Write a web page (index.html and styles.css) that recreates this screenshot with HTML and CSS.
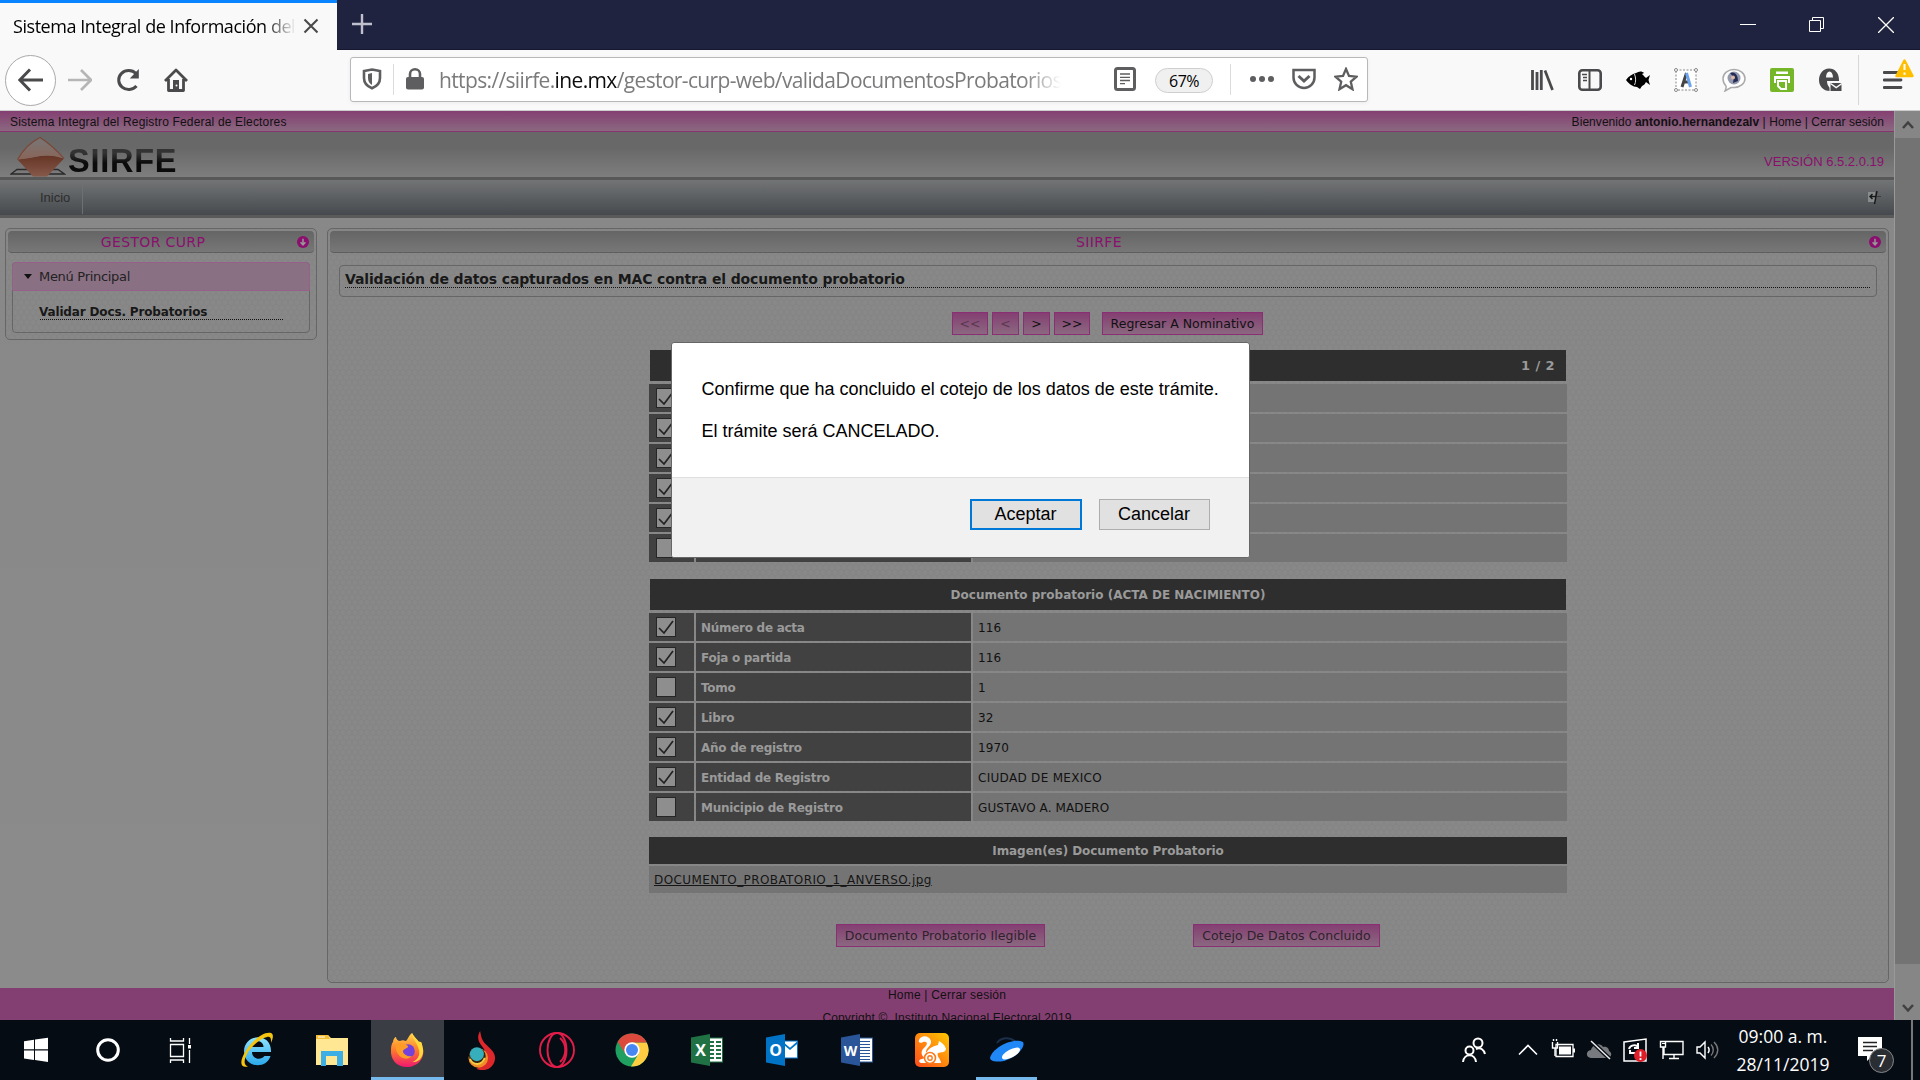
FILE: index.html
```html
<!DOCTYPE html>
<html lang="es">
<head>
<meta charset="utf-8">
<title>Sistema Integral de Información del Registro Federal de Electores</title>
<link rel="stylesheet" href="styles.css">
</head>
<body>
<svg class="defs" width="0" height="0">
  <defs>
    <g id="check"><path d="M3 11l5 5 9-12" fill="none" stroke="#222" stroke-width="1.7"/></g>
    <g id="down"><circle cx="6" cy="6" r="6" fill="#8b0f6e"/><path d="M6 2.8v6M3.6 6.2L6 8.8l2.4-2.6" fill="none" stroke="#999" stroke-width="1.5"/></g>
    <linearGradient id="gOrange" x1="0" y1="0" x2="0" y2="1"><stop offset="0" stop-color="#ffd54a"/><stop offset=".5" stop-color="#ff7a2c"/><stop offset="1" stop-color="#f01870"/></linearGradient>
    <linearGradient id="gUc" x1="0" y1="1" x2="1" y2="0"><stop offset="0" stop-color="#ff4a1c"/><stop offset="1" stop-color="#ffc800"/></linearGradient>
    <linearGradient id="gIe" x1="0" y1="0" x2="0" y2="1"><stop offset="0" stop-color="#8fe4fd"/><stop offset="1" stop-color="#2ba8ec"/></linearGradient>
    <linearGradient id="gLogo" x1="0" y1="0" x2="0" y2="1"><stop offset="0" stop-color="#777"/><stop offset="1" stop-color="#8a6558"/></linearGradient>
    <linearGradient id="gLogoLow" x1="0" y1="0" x2="0" y2="1"><stop offset="0" stop-color="#653425"/><stop offset="1" stop-color="#86594a"/></linearGradient>
  </defs>
</svg>

<div class="titlebar">
  <div class="tab"><span class="tab-title">Sistema Integral de Información del</span>
    <svg class="tab-close" width="16" height="16" viewBox="0 0 16 16"><path d="M1.5 1.5l13 13M14.5 1.5l-13 13" stroke="#4a4a4c" stroke-width="2.1"/></svg>
  </div>
  <svg class="new-tab" width="22" height="22" viewBox="0 0 22 22"><path d="M11 1v20M1 11h20" stroke="#bfc0cc" stroke-width="2.4"/></svg>
  <div class="win-controls">
    <svg width="16" height="16"><path d="M0 7.5h16" stroke="#fff"/></svg>
    <svg width="16" height="16"><path d="M.5 3.500h11v11h-11zM3.500 3.500v-3h11v11h-3" fill="none" stroke="#fff"/></svg>
    <svg width="16" height="16"><path d="M0 0l16 16M16 0L0 16" stroke="#fff" stroke-width="1.3"/></svg>
  </div>
</div>

<div class="toolbar">
  <div class="nav-icons">
    <span class="back"><svg width="26" height="26" viewBox="0 0 26 26"><path d="M25 13H2M12 2.500L1.800 13 12 23.500" fill="none" stroke="#4a4a4c" stroke-width="3"/></svg></span>
    <svg width="24" height="24" viewBox="0 0 24 24"><path d="M0 12h22M13 2l10 10-10 10" fill="none" stroke="#b6b6b8" stroke-width="2.700"/></svg>
    <svg width="24" height="24" viewBox="0 0 24 24"><path d="M20 5.500A10 9.500 0 1 0 20.500 18" fill="none" stroke="#4a4a4c" stroke-width="3"/><path d="M22.800 1v9.500h-9z" fill="#4a4a4c"/></svg>
    <svg width="24" height="24" viewBox="0 0 24 24"><path d="M1 13L12 2l11 11M4.500 11v11.500h15V11" fill="none" stroke="#4a4a4c" stroke-width="2.800" stroke-linejoin="round"/><path d="M9 12h6v10H9z" fill="#4a4a4c"/><circle cx="12.500" cy="17.500" r="1" fill="#f9f9fa"/></svg>
  </div>
  <div class="urlbar">
    <svg class="shield" width="20" height="22" viewBox="0 0 20 22"><path d="M10 1.500L18 3v7c0 5-3.500 8.500-8 10.300C5.500 18.500 2 15 2 10V3z" fill="none" stroke="#5e5e60" stroke-width="2.600"/><path d="M10 5v12c-2.500-1.500-4-3.500-4-7V6z" fill="#5e5e60"/></svg>
    <i class="vsep"></i>
    <svg class="lock" width="20" height="22" viewBox="0 0 20 22"><path d="M5 10V6a5 4.700 0 0 1 10 0v4" fill="none" stroke="#5e5e60" stroke-width="2.600"/><rect x="1" y="9" width="18" height="12.500" rx="2" fill="#5e5e60"/></svg>
    <span class="url">https://siirfe.<b>ine.mx</b>/gestor-curp-web/validaDocumentosProbatorios/</span>
    <svg class="reader" width="22" height="24" viewBox="0 0 22 24"><rect x="1.500" y="1.500" width="19" height="21" rx="2" fill="#fff" stroke="#5e5e60" stroke-width="3"/><path d="M6 7h10M6 10.300h10M6 13.500h10M6 16.700h5" stroke="#5e5e60" stroke-width="1.300"/></svg>
    <span class="zoom">67%</span>
    <i class="vsep sep2"></i>
    <svg class="dots" width="26" height="8" viewBox="0 0 26 8"><g fill="#5e5e60"><circle cx="4" cy="4" r="3"/><circle cx="13" cy="4" r="3"/><circle cx="22" cy="4" r="3"/></g></svg>
    <svg class="pocket" width="24" height="22" viewBox="0 0 24 22"><path d="M1.500 2h21v7.500a10.500 10.500 0 0 1-21 0z" fill="none" stroke="#5e5e60" stroke-width="2.500"/><path d="M6.500 8l5.500 5 5.500-5" fill="none" stroke="#5e5e60" stroke-width="3"/></svg>
    <svg class="star" width="24" height="24" viewBox="0 0 24 24"><path d="M12 2l3 7 7.500.7-5.700 5 1.700 7.500-6.500-4-6.500 4 1.700-7.500-5.700-5L9 9z" fill="none" stroke="#5e5e60" stroke-width="2.300"/></svg>
  </div>
  <div class="ext">
    <svg width="24" height="24" viewBox="0 0 24 24"><path d="M2.500 2v20M7 4v18M11.300 2v20" stroke="#4a4a4c" stroke-width="2.800"/><path d="M15 2.500l7.500 19.500" stroke="#4a4a4c" stroke-width="2.700"/></svg>
    <svg width="24" height="24" viewBox="0 0 24 24"><rect x="1.300" y="2.300" width="21.400" height="19.400" rx="3" fill="none" stroke="#4a4a4c" stroke-width="2.600"/><path d="M11.500 2v20" stroke="#4a4a4c" stroke-width="2"/><path d="M4 6.500h5M5 9.500h4M5 12.500h4" stroke="#4a4a4c" stroke-width="1.500"/></svg>
    <svg width="24" height="24" viewBox="0 0 24 24"><path d="M0 12c3-4 6-6 10-7 3-2 6-2 8 0l-2 1c2 2 3 3 4 4l4-3-1.500 5 1.500 5-4-3c-1 2-2 3-4 4l-2 3-3-2c-4 0-8-3-11-7z" fill="#000"/><circle cx="5" cy="11" r="1.200" fill="#fff"/><path d="M8.500 6c1.500 4 1.500 8 0 11" fill="none" stroke="#ddd"/></svg>
    <svg width="24" height="24" viewBox="0 0 24 24"><rect x="2" y="2" width="20" height="20" fill="#fff" stroke="#888" stroke-dasharray="2 1.500"/><g fill="#fff" stroke="#888"><circle cx="2" cy="2" r="1.500"/><circle cx="22" cy="2" r="1.500"/><circle cx="2" cy="22" r="1.500"/><circle cx="22" cy="22" r="1.500"/></g><path d="M12.500 5L8 19M9 14h5" stroke="#444" stroke-width="3"/><path d="M12.500 5L16.500 19" stroke="#6da4ee" stroke-width="3"/></svg>
    <svg width="24" height="24" viewBox="0 0 24 24"><path d="M12 1.500c6 0 11 4 11 9s-5 9-11 9l-3 0-6 3.500c1-2 1.300-3 1-5C2 16 1 13.500 1 10.500c0-5 5-9 11-9z" fill="#fff" stroke="#aaa" stroke-width="1.500"/><circle cx="12" cy="10" r="6.500" fill="#9599ae"/><path d="M8 5c5-2 8 2 8 8l-5 2c1-4 0-7-3-10z" fill="#222c55"/><circle cx="11" cy="9.500" r="2" fill="#e3b9a5"/></svg>
    <svg width="24" height="24" viewBox="0 0 24 24"><rect width="24" height="24" rx="2" fill="#76b72a"/><path d="M6 3.500h12v2.500H6zM4 8h16v7h-2v-4H6v4H4z" fill="#fff"/><path d="M8 13h8v8h-5l-3-3z" fill="none" stroke="#fff" stroke-width="2"/></svg>
    <svg width="24" height="24" viewBox="0 0 24 24"><path d="M11 0.500C17 0.500 21 5 21 12v1H9c0 3 1 5 3 7v3C5 23 1 18 1 12S5 .5 11 .5zM8 9.500h7c0-8-7-8-7 0z" fill="#4a4a4c" fill-rule="evenodd"/><path d="M12 14.500H24v9H12z" fill="#4a4a4c" stroke="#f9f9fa"/><path d="M12.500 15.500l5.700 4 5.700-4" fill="none" stroke="#f9f9fa" stroke-width="1.500"/></svg>
  </div>
  <i class="ext-sep"></i>
  <div class="menu"><svg width="20" height="20" viewBox="0 0 20 20"><path d="M1 2.500h17M1 10h17M1 17.500h17" stroke="#4a4a4c" stroke-width="2.800" stroke-linecap="round"/></svg>
    <svg class="warn" width="19" height="19" viewBox="0 0 19 19"><path d="M9.500 1.500L17.500 17H1.500z" fill="#ffbf00" stroke="#ffbf00" stroke-width="2.500" stroke-linejoin="round"/><path d="M9.500 5v6M9.500 13.500v2.200" stroke="#fff" stroke-width="2"/></svg>
  </div>
</div>

<div class="viewport">
  <div class="page">
    <div class="topline"><span class="t-sys">Sistema Integral del Registro Federal de Electores</span><span class="t-user">Bienvenido <b>antonio.hernandezalv</b> | Home | Cerrar sesión</span></div>
    <div class="brand">
      <svg class="logo" width="56" height="41" viewBox="0 0 56 41"><path d="M7 33.500h41l6.500 4.500H1z" fill="#7a7a7a" stroke="#2a2a2a" stroke-width="1.400"/><path d="M7.500 23.500L23 40.500h14L54 22.500Q42 18 30 20 18 22.500 7.500 23.500z" fill="url(#gLogoLow)"/><path d="M30 1.500Q15.500 9 7.500 23.500 18 22.500 30 20 42 18 54 22.500 42 9 30 1.500z" fill="url(#gLogo)"/><path d="M7.500 23.500Q15.500 9 30 1.500 42 9 54 22.500" fill="none" stroke="#7a4535" stroke-width="1.100"/></svg>
      <span class="brand-name">SIIRFE</span>
      <span class="version">VERSIÓN 6.5.2.0.19</span>
    </div>
    <div class="navbar"><span class="nav-item">Inicio</span>
      <svg class="nav-mark" width="14" height="14" viewBox="0 0 14 14"><path d="M0 1h7v10H0z" fill="#888b8c"/><path d="M2 5.500h6M4.500 3L2 5.500 4.500 8M9 0L6.500 13" stroke="#181818" stroke-width="1.400" fill="none"/><path d="M8 5.500h5" stroke="#333" stroke-width=".8"/></svg>
    </div>

    <div class="content">
      <aside class="panel side">
        <div class="panel-head"><span class="t-gestor">GESTOR CURP</span><svg class="down" width="12" height="12"><use href="#down"/></svg></div>
        <div class="tree">
          <div class="tree-head"><i class="caret"></i><span class="t-menu">Menú Principal</span></div>
          <div class="tree-item"><span class="t-val">Validar Docs. Probatorios</span></div>
        </div>
      </aside>
      <main class="panel main">
        <div class="panel-head"><span class="t-siirfe">SIIRFE</span><svg class="down" width="12" height="12"><use href="#down"/></svg></div>
        <div class="heading"><div class="heading-line"><span class="t-head">Validación de datos capturados en MAC contra el documento probatorio</span></div></div>
        <div class="pager">
          <button class="btn b1 off">&lt;&lt;</button><button class="btn b2 off">&lt;</button><button class="btn b2">&gt;</button><button class="btn b1">&gt;&gt;</button><button class="btn b3">Regresar A Nominativo</button>
        </div>
        <section class="grid first">
          <div class="grid-head right"><span>1 / 2</span></div>
          <div class="row"><div class="c1"><i class="cb"><svg><use href="#check"/></svg></i></div><div class="c2"></div><div class="c3"></div></div>
          <div class="row"><div class="c1"><i class="cb"><svg><use href="#check"/></svg></i></div><div class="c2"></div><div class="c3"></div></div>
          <div class="row"><div class="c1"><i class="cb"><svg><use href="#check"/></svg></i></div><div class="c2"></div><div class="c3"></div></div>
          <div class="row"><div class="c1"><i class="cb"><svg><use href="#check"/></svg></i></div><div class="c2"></div><div class="c3"></div></div>
          <div class="row"><div class="c1"><i class="cb"><svg><use href="#check"/></svg></i></div><div class="c2"></div><div class="c3"></div></div>
          <div class="row"><div class="c1"><i class="cb"></i></div><div class="c2"></div><div class="c3"></div></div>
        </section>
        <section class="grid second">
          <div class="grid-head"><span>Documento probatorio (ACTA DE NACIMIENTO)</span></div>
          <div class="row"><div class="c1"><i class="cb"><svg><use href="#check"/></svg></i></div><div class="c2">Número de acta</div><div class="c3">116</div></div>
          <div class="row"><div class="c1"><i class="cb"><svg><use href="#check"/></svg></i></div><div class="c2">Foja o partida</div><div class="c3">116</div></div>
          <div class="row"><div class="c1"><i class="cb"></i></div><div class="c2">Tomo</div><div class="c3">1</div></div>
          <div class="row"><div class="c1"><i class="cb"><svg><use href="#check"/></svg></i></div><div class="c2">Libro</div><div class="c3">32</div></div>
          <div class="row"><div class="c1"><i class="cb"><svg><use href="#check"/></svg></i></div><div class="c2">Año de registro</div><div class="c3">1970</div></div>
          <div class="row"><div class="c1"><i class="cb"><svg><use href="#check"/></svg></i></div><div class="c2">Entidad de Registro</div><div class="c3 wide">CIUDAD DE MEXICO</div></div>
          <div class="row"><div class="c1"><i class="cb"></i></div><div class="c2">Municipio de Registro</div><div class="c3">GUSTAVO A. MADERO</div></div>
        </section>
        <section class="files">
          <div class="files-head"><span>Imagen(es) Documento Probatorio</span></div>
          <div class="files-row"><a>DOCUMENTO_PROBATORIO_1_ANVERSO.jpg</a></div>
        </section>
        <div class="actions"><button class="btn a1 dim">Documento Probatorio Ilegible</button><button class="btn a2 dim">Cotejo De Datos Concluido</button></div>
      </main>
    </div>
    <footer class="footer"><div class="f1"><span>Home | Cerrar sesión</span></div><div class="f2"><span>Copyright ©&nbsp; Instituto Nacional Electoral 2019</span></div></footer>
  </div>
  <div class="scroll">
    <div class="arrow"><svg width="12" height="10" viewBox="0 0 12 10"><path d="M1 8l5-5.500L11 8" fill="none" stroke="#404040" stroke-width="2.500"/></svg></div>
    <div class="thumb"></div>
    <div class="arrow end"><svg width="12" height="10" viewBox="0 0 12 10"><path d="M1 2l5 5.500L11 2" fill="none" stroke="#404040" stroke-width="2.500"/></svg></div>
  </div>
  <div class="dialog">
    <div class="dialog-body"><p>Confirme que ha concluido el cotejo de los datos de este trámite.</p><p>El trámite será CANCELADO.</p></div>
    <div class="dialog-foot"><button class="dlg ok">Aceptar</button><button class="dlg">Cancelar</button></div>
  </div>
</div>

<div class="taskbar">
  <div class="sys"><svg width="26" height="26" viewBox="0 0 26 26"><path d="M1 4.300L11 2.800v9.500H1zM12 2.600L25 .7v11.600H12zM1 13.400h10v9.500L1 21.500zM12 13.400h13V25l-13-1.900z" fill="#fff"/></svg></div>
  <div class="sys"><svg width="26" height="26" viewBox="0 0 26 26"><circle cx="13" cy="13" r="10.300" fill="none" stroke="#fff" stroke-width="3"/></svg></div>
  <div class="sys"><svg width="26" height="26" viewBox="0 0 26 26"><path d="M3.500 7.500h13v12h-13zM3.500 1v3h13V1M3.500 26v-3h13v3M22.500 1v6M22.500 13v13" fill="none" stroke="#fff" stroke-width="1.300"/><rect x="21" y="8" width="3" height="3.500" fill="#fff"/></svg></div>
  <div class="app first-app"><svg width="36" height="36" viewBox="0 0 36 36"><path d="M32 20H13c0 7 8.500 9 12.500 4h6C28 37 6 37 5 19.500 5 1 33 0 32 20zM13 15h11.500c0-7-11-8-11.500 0z" fill="url(#gIe)"/><path d="M9 34.500c-8 2-9-5-2-16C14 8 25-1 32 1c3 1 2 6 0 10 .5-5-1-7-4-6C22 6 14 13 9 20c-4 7-5 13 0 14.500z" fill="#f6c511"/></svg></div>
  <div class="app"><svg width="34" height="34" viewBox="0 0 34 34"><path d="M1 2h12l3 3h17v27H1z" fill="#ffe794"/><path d="M1 2h12l2 4H1z" fill="#f5be35"/><path d="M3 4h7" stroke="#fff"/><path d="M6 18h22v15h-6V23H11v10H6z" fill="#3dafe4"/></svg></div>
  <div class="app active"><svg width="36" height="36" viewBox="0 0 36 36"><path d="M23 1c2 4 5 6 7 9 3-1 3 3 4 7 2 10-6 18-16 18S1 28 2 17c0-3 1-6 2-7 0-3 2-5 3-5 0 2 2 4 4 4 2-1 3-1 6 0 2-2 3-6 6-8z" fill="url(#gOrange)"/><path d="M23 1c0 6 4 8 6 14 4 9-2 14-6 15 8 1 12-7 11-13-1-4-1-8-4-7-2-3-5-5-7-9z" fill="#ffd83e"/><circle cx="19" cy="19" r="6.800" fill="#7442db"/><path d="M7 12c5-2 8-1 12 2 0 3-4 2-5 5 0 4 6 6 9 5-7 7-18-1-16-12z" fill="#ff9c28"/></svg></div>
  <div class="app"><svg width="32" height="40" viewBox="0 0 34 43"><path d="M17 0c-3 5-3 10 1 15 4 5 7 10 4 16-2 5-6 8-9 10 11 4 20-3 20-12 0-6-4-9-9-14-5-4-6-9-7-15z" transform="translate(-2 1)" fill="#dd282b"/><circle cx="13" cy="30" r="10.500" fill="#f28c27"/><circle cx="12" cy="28" r="9" fill="#37210f"/><circle cx="11.500" cy="26" r="7.500" fill="#37aebb"/><path d="M4 31c4 8 13 7 16-1" fill="none" stroke="#f7cb42" stroke-width="2"/></svg></div>
  <div class="app"><svg width="38" height="38" viewBox="0 0 38 38"><g fill="none" stroke="#e21d49" stroke-width="1.900"><circle cx="19" cy="19" r="17"/><ellipse cx="19" cy="19" rx="9.500" ry="17"/><path d="M22 7c7 6 7 18 0 24"/></g></svg></div>
  <div class="app"><svg width="34" height="34" viewBox="0 0 34 34"><circle cx="17" cy="17" r="16.500" fill="#1fa061"/><path d="M17 9.500h14.700A16.500 16.500 0 0 1 16 33.500L23.500 21z" fill="#fecd41"/><path d="M2.700 8.800L10.500 21 17 9.500h14.700A16.500 16.500 0 0 0 2.700 8.800z" fill="#dc4a3e"/><circle cx="17" cy="17" r="7.700" fill="#fff"/><circle cx="17" cy="17" r="6" fill="#4687f4"/></svg></div>
  <div class="app"><svg width="32" height="32" viewBox="0 0 32 32"><rect x="16" y="4" width="15.500" height="24" fill="#fff" stroke="#207245"/><path d="M19 8h4M25 8h5M19 12h4M25 12h5M19 16h4M25 16h5M19 20h4M25 20h5M19 24h4M25 24h5" stroke="#207245" stroke-width="2"/><path d="M0 3.500L19 0v32L0 28.500z" fill="#207245"/><text x="9.500" y="21.500" class="office">X</text></svg></div>
  <div class="app"><svg width="32" height="32" viewBox="0 0 32 32"><rect x="16" y="7" width="15.500" height="17" fill="#fff" stroke="#0173c7"/><path d="M17 9l7 6 8-7" fill="none" stroke="#0173c7" stroke-width="1.700"/><path d="M0 3.500L19 0v32L0 28.500z" fill="#0173c7"/><text x="9.500" y="21.500" class="office">O</text></svg></div>
  <div class="app"><svg width="32" height="32" viewBox="0 0 32 32"><rect x="16" y="4" width="15.500" height="24" fill="#fff" stroke="#2a5699"/><path d="M19 7.500h10M19 10.500h10M19 13.500h10M19 16.500h10M19 19.500h10M19 22.500h10M19 25.500h10" stroke="#2a5699" stroke-width="1.200"/><path d="M0 3.500L19 0v32L0 28.500z" fill="#2a5699"/><text x="9.500" y="21.500" class="office w">W</text></svg></div>
  <div class="app"><svg width="34" height="34" viewBox="0 0 34 34"><rect width="34" height="34" rx="5" fill="url(#gUc)"/><path d="M12 30H6c-3-1-2-4 1-4l3-1c-5-3-4-8 0-11 4-4 1-6-2-5-3 2-5 0-4-2 2-5 10-5 12 1 1 5-6 7-5 12 3-5 7-7 12-8l1-4c3 2 6 4 7 8-1 4-5 3-8 4-2 3 3 6 3 10h-6" fill="#fff"/><circle cx="15" cy="25" r="5.500" fill="#fff" stroke="#fb7a1c" stroke-width="1.600"/><circle cx="15" cy="25" r="2.200" fill="none" stroke="#fb7a1c" stroke-width="1.400"/></svg></div>
  <div class="app under"><svg width="38" height="34" viewBox="0 0 38 34"><path d="M9 10c4-6 13-6 18-2" fill="none" stroke="#1b2f4a" stroke-width="2"/><path d="M2 25C4 15 25 4 35 9c3 5-7 16-19 19-7 1-13 1-14-3z" fill="#2087f7"/><ellipse cx="23" cy="20.500" rx="10" ry="4" transform="rotate(-28 23 20.500)" fill="#fff"/></svg></div>
  <div class="tray">
    <svg width="26" height="26" viewBox="0 0 26 26"><g fill="none" stroke="#fff" stroke-width="2"><circle cx="8.500" cy="13.500" r="4"/><path d="M2 25c1-9 12-9 13 0"/><circle cx="17" cy="6" r="4.500"/><path d="M15 12c5-2 8 1 9 5"/></g></svg>
    <svg class="chev" width="20" height="12" viewBox="0 0 20 12"><path d="M1 10.500l9-9 9 9" fill="none" stroke="#fff" stroke-width="1.600"/></svg>
    <svg width="24" height="24" viewBox="0 0 24 24"><path d="M5 6.500h17v12H5z" fill="none" stroke="#fff" stroke-width="1.300"/><path d="M8 8.500h12v8H8zM22 10.500h2v4h-2z" fill="#fff"/><path d="M1.500 4v6h5V4M2.500 3V1M5.500 3V1M4 10v8" fill="none" stroke="#fff" stroke-width="1.400"/></svg>
    <svg width="26" height="24" viewBox="0 0 26 24"><path d="M5 20c-5 0-6-7 0-8 2-7 10-7 12-3 4-1 6 2 6 4 4 2 2 7-1 7z" fill="#777a7e"/><path d="M5 3l19 18" stroke="#070d14" stroke-width="4"/><path d="M5 3l19 18" stroke="#eee" stroke-width="1.500"/></svg>
    <svg width="24" height="26" viewBox="0 0 24 26"><path d="M1 5l22-3v22H1z" fill="none" stroke="#fff" stroke-width="1.500"/><path d="M6 12c1-4 7-5 9-2M15 6v5h-4M14 16H7v-3" fill="none" stroke="#fff" stroke-width="2"/><circle cx="17.500" cy="18.500" r="6.500" fill="#de1f29"/><path d="M17.500 14.500v5M17.500 21v2" stroke="#fff" stroke-width="1.800"/></svg>
    <svg width="26" height="24" viewBox="0 0 26 24"><path d="M8 3.500h17v13H6V9M16 17v3.500M11 20.500h10M2.500 3.500h5V9h-5zM5 9v12" fill="none" stroke="#fff" stroke-width="1.400"/><path d="M4 5.500h3" stroke="#fff"/></svg>
    <svg width="26" height="24" viewBox="0 0 26 24"><path d="M2 9h3l5-5v16l-5-5H2z" fill="none" stroke="#fff" stroke-width="1.400"/><path d="M13 9c1.500 2 1.500 4 0 6" fill="none" stroke="#fff" stroke-width="1.500"/><path d="M16 6.500c3 3 3 8 0 11M19 4c5 5 5 11 0 16" fill="none" stroke="#777" stroke-width="1.400"/></svg>
    <div class="clock"><span>09:00 a. m.</span><span>28/11/2019</span></div>
    <div class="notes"><svg width="38" height="38" viewBox="0 0 38 38"><path d="M1 2h24v19H15l-5 5v-5H1z" fill="#fff"/><path d="M6 7.500h14M6 11.500h14M6 15.500h10" stroke="#222" stroke-width="1.300"/><circle cx="24.500" cy="25.500" r="12" fill="#2a2d31" stroke="#85878a"/><text x="24.500" y="31.500" class="count">7</text></svg></div>
  </div>
</div>
</body>
</html>
```
FILE: styles.css
```css
* { box-sizing: border-box; }
body { margin: 0; width: 1920px; height: 1080px; overflow: hidden; display: flex; flex-direction: column; background: #8a8a8a; font-family: "DejaVu Sans", Verdana, sans-serif; white-space: nowrap; }
svg { display: block; flex: none; }
.defs { position: absolute; }
button { font: inherit; margin: 0; padding: 0; border-radius: 0; }

/* browser chrome */
.titlebar { height: 50px; background: #202340; border-bottom: 1px solid #16182f; display: flex; align-items: center; flex: none; }
.tab { width: 337px; height: 50px; background: #f9f9fa; border-top: 3px solid #0a84ff; display: flex; align-items: center; padding: 0 18px 1px 13px; justify-content: space-between; }
.tab-title { font: 18px "Open Sans", sans-serif; letter-spacing: -0.45px; width: 283px; overflow: hidden; -webkit-mask-image: linear-gradient(90deg, #000 250px, transparent 283px); mask-image: linear-gradient(90deg, #000 250px, transparent 283px); }
.new-tab { margin-left: 14px; margin-top: -2px; }
.win-controls { margin-left: auto; display: flex; gap: 53px; padding-right: 26px; }
.toolbar { height: 61px; background: #f9f9fa; border-bottom: 1px solid #ccc; display: flex; align-items: center; flex: none; padding-left: 5px; }
.nav-icons { width: 345px; display: flex; align-items: center; gap: 24px; }
.back { width: 51px; height: 51px; border: 1px solid #a9a9ab; border-radius: 50%; background: #fff; display: flex; align-items: center; justify-content: center; margin-right: -12px; }
.urlbar { width: 1018px; height: 45px; border: 1px solid #b8b8ba; border-radius: 3px; background: #fff; display: flex; align-items: center; box-shadow: 0 1px 4px rgba(0,0,0,.06); padding-left: 11px; margin-top: -2px; }
.vsep { width: 1px; height: 31px; background: #dcdcdc; margin: 0 11px; }
.url { font: 21px "Open Sans", sans-serif; color: #7b7b7d; letter-spacing: -0.64px; margin: 2px 0 0 14px; width: 622px; overflow: hidden; -webkit-mask-image: linear-gradient(90deg, #000 585px, transparent 622px); mask-image: linear-gradient(90deg, #000 585px, transparent 622px); }
.url b { font-weight: normal; color: #0c0c0d; }
.reader { margin-left: 53px; }
.zoom { width: 58px; height: 25px; border: 1px solid #cfcfcf; border-radius: 13px; background: #f0f0f0; font: 16px/24px "Open Sans", sans-serif; letter-spacing: -.5px; text-align: center; margin: 2px 0 0 19px; }
.sep2 { margin: 0 18px 0 17px; }
.pocket { margin-left: 17px; }
.star { margin-left: 18px; }
.ext { display: flex; gap: 24px; margin-left: 162px; }
.ext-sep { width: 1px; height: 50px; background: #d7d7db; margin-left: 16px; }
.menu { margin-left: 24px; position: relative; }
.warn { position: absolute; left: 12px; top: -11px; }

/* web page */
.viewport { position: relative; height: 909px; display: flex; flex: none; }
.page { width: 1894px; display: flex; flex-direction: column; background: #8a8a8a; }
.topline { height: 21px; background: linear-gradient(#843f72, #8b6880); border-bottom: 1px solid #853671; display: flex; justify-content: space-between; padding: 1px 10px 0; font: 12px/21px "Liberation Sans", Arial, sans-serif; color: #111; }
.t-sys { letter-spacing: .17px; }
.t-user { letter-spacing: .05px; }
.brand { height: 45px; background: linear-gradient(#686868 35%, #7e7e7e); display: flex; align-items: center; padding: 0 10px; }
.logo { margin-top: 4px; }
.brand-name { font: bold 32.500px/40px "Liberation Sans", Arial, sans-serif; margin: 12px 0 0 2px; letter-spacing: .75px; background: linear-gradient(#333 30%, #0b0b0b 55%); -webkit-background-clip: text; background-clip: text; color: transparent; }
.version { margin-left: auto; margin-top: 13px; font: 13px "Liberation Sans", Arial, sans-serif; color: #8b0f6e; }
.navbar { height: 41px; border-top: 3px solid #585858; border-bottom: 3px solid #5a5a5a; background: linear-gradient(#727475, #464a4e); display: flex; align-items: center; justify-content: space-between; padding-right: 12px; }
.nav-item { width: 83px; height: 32px; padding-left: 40px; font: 13px/31px "Liberation Sans", Arial, sans-serif; color: #2c2c2c; border-right: 1px solid #6d7072; }
.content { display: flex; gap: 10px; padding: 10px 0 0 5px; height: 770px; align-items: flex-start; background: linear-gradient(#888, #8b8b8b); }
.panel { border: 1px solid #666; border-radius: 5px; padding: 2px; background-color: #888; background-image: url("data:image/svg+xml,%3Csvg xmlns='http://www.w3.org/2000/svg' width='6' height='10'%3E%3Cpath d='M0 2l3-2 3 2v3L3 7 0 5zM3 7v3' fill='none' stroke='%23828282' stroke-width='.8'/%3E%3C/svg%3E"); }
.side { width: 312px; height: 112px; }
.main { width: 1562px; height: 755px; }
.panel-head { position: relative; height: 22px; border-radius: 4px; border-bottom: 1px solid #5e5e5e; background: linear-gradient(#656565, #777); color: #8b0f6e; font-size: 14px; letter-spacing: .35px; line-height: 22px; display: flex; justify-content: center; }
.t-gestor { margin-right: 16px; }
.t-siirfe { margin-right: 18px; }
.down { position: absolute; right: 5px; top: 5px; }
.tree { margin: 9px 4px 0; height: 71px; border: 1px solid #666; border-radius: 4px; }
.tree-head { height: 29px; margin: -1px -1px 0; border: 1px solid #96608a; border-radius: 4px 4px 0 0; background: #8a7083; display: flex; align-items: center; color: #222; font-size: 13px; letter-spacing: -.3px; padding-left: 11px; }
.caret { border: 4px solid transparent; border-top: 5px solid #111; border-bottom: 0; margin-right: 7px; }
.tree-item { margin: 12px 26px 0 27px; height: 17px; border-bottom: 1px dotted #111; font-weight: bold; font-size: 12px; letter-spacing: -.15px; line-height: 19px; color: #181818; }
.t-val { margin-left: -1px; }
.heading { margin: 12px 9px 0; height: 32px; border: 1px solid #666; border-radius: 4px; padding: 4px 6px 0 5px; }
.heading-line { height: 18px; border-bottom: 1px dotted #111; font-weight: bold; font-size: 14px; letter-spacing: -.14px; line-height: 19px; color: #181818; }
.pager { display: flex; margin: 15px 0 0 622px; }
.btn { height: 23px; border: 1px solid #8b2f75; background: linear-gradient(#843f72, #8b6880); color: #111; font-size: 12.500px; line-height: 21px; }
.off { color: #59384f; }
.dim { color: #30222c; letter-spacing: .05px; }
.b1 { width: 36px; margin-right: 4px; }
.b2 { width: 27px; margin-right: 4px; }
.b3 { width: 161px; margin-left: 8px; }
.grid { margin: 15px 0 0 319px; width: 918px; display: grid; row-gap: 2px; font-size: 12px; color: #111; }
.second { margin-top: 17px; }
.grid-head { height: 31px; margin: 0 1px 1px; background: #2e2e2e; color: #9a9a9a; font-weight: bold; line-height: 32px; text-align: center; }
.right { text-align: right; padding-right: 11px; font-size: 13px; letter-spacing: .4px; }
.row { display: grid; grid-template-columns: 45px 275px 594px; column-gap: 2px; height: 28px; line-height: 30px; }
.c1 { background: #414141; padding: 4px 0 0 7px; }
.c2 { background: #414141; color: #9a9a9a; font-weight: bold; letter-spacing: -.28px; padding-left: 5px; height: 28px; }
.c3 { background: #747474; padding-left: 5px; letter-spacing: .1px; height: 28px; }
.wide { letter-spacing: .3px; }
.cb { display: block; width: 20px; height: 20px; border: 1px solid #262626; background: #8e8e8e; }
.cb svg { width: 20px; height: 20px; margin: -1px; }
.files { margin: 16px 0 0 319px; width: 918px; font-size: 12px; }
.files-head { height: 27px; background: #2e2e2e; color: #9a9a9a; font-weight: bold; line-height: 28px; letter-spacing: -.08px; text-align: center; }
.files-row { margin-top: 2px; height: 27px; background: #747474; padding-left: 5px; line-height: 28px; color: #161616; letter-spacing: .4px; }
.files-row a { text-decoration: underline; }
.actions { display: flex; margin: 31px 0 0 506px; gap: 148px; }
.a1 { width: 209px; }
.a2 { width: 187px; }
.footer { height: 32px; overflow: hidden; background: #843f72; color: #111; font: 12px "Liberation Sans", Arial, sans-serif; text-align: center; }
.f1 { height: 22px; line-height: 14px; letter-spacing: .22px; }
.f2 { line-height: 16px; letter-spacing: .15px; }
.scroll { width: 26px; border-left: 1px solid #999; background: #868686; display: flex; flex-direction: column; }
.arrow { height: 27px; display: flex; align-items: center; justify-content: center; }
.thumb { height: 826px; background: #737373; }
.end { margin-top: auto; height: 24px; }

/* confirm dialog, drawn over the page */
.dialog { position: absolute; left: 671px; top: 231px; width: 579px; height: 216px; border: 1px solid #666; border-radius: 3px; background: #fff; font: 18px "Liberation Sans", Arial, sans-serif; color: #000; overflow: hidden; }
.dialog-body { height: 134px; padding: 36px 20px 0 29.500px; }
.dialog-body p { margin: 0 0 21px; line-height: 21px; }
.dialog-foot { height: 82px; background: #f1f1f1; border-top: 1px solid #dfdfdf; display: flex; gap: 17px; padding: 21px 0 0 298px; }
.dlg { width: 111px; height: 31px; border: 1px solid #adadad; background: #e1e1e1; color: #000; padding: 0 1px 2px 0; line-height: 26px; }
.ok { width: 112px; border: 2px solid #0078d7; line-height: 24px; }

/* task bar */
.taskbar { height: 60px; background: #060c14; display: flex; flex: none; }
.sys { width: 72px; display: flex; align-items: center; justify-content: center; }
.app { width: 73px; margin: 0 1px; display: flex; align-items: center; justify-content: center; }
.first-app { margin-left: 4px; }
.active { background: #3a3d43; border-bottom: 3px solid #76b9ed; padding: 2px 2px 0 0; margin: 0 0 0 2px; }
.under { background: linear-gradient(#76b9ed, #76b9ed) 50% 100% / 61px 3px no-repeat; }
.office { font: bold 16px "Open Sans", sans-serif; fill: #fff; text-anchor: middle; }
.office.w { font-size: 14px; }
.tray { margin-left: auto; display: flex; align-items: center; gap: 11px; width: 459px; }
.chev { margin: 0 2px 0 20px; }
.clock { width: 100px; margin-left: 1px; display: flex; flex-direction: column; align-items: center; font: 17.500px/28px "Open Sans", sans-serif; color: #fff; }
.notes { margin-left: 13px; padding-top: 15px; width: 56px; border-right: 2px solid #777; height: 60px; }
.count { font: 17px "Open Sans", sans-serif; fill: #fff; text-anchor: middle; }
```
